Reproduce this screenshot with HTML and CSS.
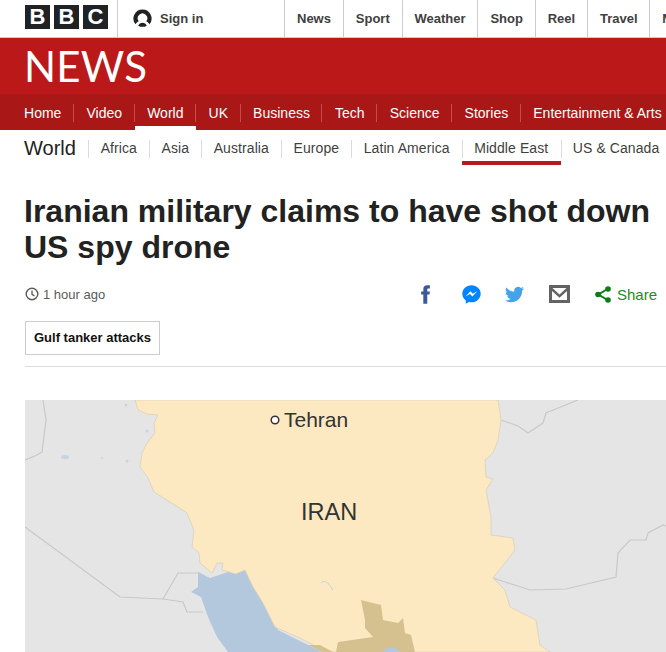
FILE: index.html
```html
<!DOCTYPE html>
<html lang="en">
<head>
    <meta charset="UTF-8">
    <meta name="viewport" content="width=device-width, initial-scale=1.0">
    <title>Iranian military claims to have shot down US spy drone - BBC News</title>
    <link rel="stylesheet" href="styles.css">
</head>
<body>
    <div class="top-bar">
        <div class="bbc-logo">
            <span>B</span><span>B</span><span>C</span>
        </div>
        <a class="sign-in" href="#">
            <svg class="sign-in-icon" viewBox="0 0 20 20">
                <path fill="#1f2326" d="M10 .5a9.500 9.500 0 0 1 7.300 15.600c-.8-1.600-2-2.600-3.400-3.200a5 5 0 1 0-7.800 0c-1.400.6-2.600 1.600-3.400 3.200A9.500 9.500 0 0 1 10 .5z"/>
                <path fill="#1f2326" d="M5.500 17.500c.8-1.800 2.500-3 4.500-3s3.700 1.200 4.500 3c-1.300.8-2.900 1.300-4.500 1.300s-3.200-.5-4.500-1.300z"/>
            </svg>
            Sign in
        </a>
        <div class="top-links">
            <a href="#">News</a>
            <a href="#">Sport</a>
            <a href="#">Weather</a>
            <a href="#">Shop</a>
            <a href="#">Reel</a>
            <a href="#">Travel</a>
            <a href="#">More</a>
        </div>
    </div>

    <div class="masthead">
        <div class="news-logo">NEWS</div>
    </div>

    <div class="main-nav">
        <a href="#"><span>Home</span></a>
        <a href="#"><span>Video</span></a>
        <a href="#" class="active"><span>World</span></a>
        <a href="#"><span>UK</span></a>
        <a href="#"><span>Business</span></a>
        <a href="#"><span>Tech</span></a>
        <a href="#"><span>Science</span></a>
        <a href="#"><span>Stories</span></a>
        <a href="#"><span>Entertainment &amp; Arts</span></a>
    </div>

    <div class="sub-nav">
        <div class="sub-title">World</div>
        <a href="#"><span>Africa</span></a>
        <a href="#"><span>Asia</span></a>
        <a href="#"><span>Australia</span></a>
        <a href="#"><span>Europe</span></a>
        <a href="#"><span>Latin America</span></a>
        <a href="#" class="active"><span>Middle East</span></a>
        <a href="#"><span>US &amp; Canada</span></a>
    </div>

    <div class="story">
        <h1 class="headline">Iranian military claims to have shot down US spy drone</h1>

        <div class="meta-row">
            <div class="time">
                <svg class="clock" viewBox="0 0 14 14">
                    <circle cx="7" cy="7" r="5.800" fill="none" stroke="#5a5a5a" stroke-width="1.400"/>
                    <path d="M7 3.500V7.300L9.500 9" fill="none" stroke="#5a5a5a" stroke-width="1.300"/>
                </svg>
                1 hour ago
            </div>
            <div class="share-icons">
                <svg class="icon-fb" viewBox="0 0 24 24"><path fill="#3b5998" d="M14 8.500V6.300c0-1 .5-1.300 1.300-1.300H17V1.500h-2.800C11 1.500 9.500 3.400 9.500 6v2.500H7V12h2.500v10.500H14V12h2.600l.4-3.500z"/></svg>
                <svg class="icon-messenger" viewBox="0 0 24 24"><path fill="#0084ff" fill-rule="evenodd" d="M12 1.500C6.200 1.500 1.500 5.800 1.500 11.100c0 3 1.500 5.700 3.900 7.500V22.500l3.600-2c1 .3 2 .4 3 .4 5.800 0 10.500-4.300 10.500-9.800S17.800 1.500 12 1.500zm1 12.800l-2.700-2.800-5.200 2.800 5.700-6 2.700 2.800 5.200-2.800z"/></svg>
                <svg class="icon-twitter" viewBox="0 0 24 24"><path fill="#45a3ea" d="M23.953 4.570a10 10 0 01-2.825.775 4.958 4.958 0 002.163-2.723c-.951.555-2.005.959-3.127 1.184a4.920 4.920 0 00-8.384 4.482C7.690 8.095 4.067 6.130 1.640 3.162a4.822 4.822 0 00-.666 2.475c0 1.710.870 3.213 2.188 4.096a4.904 4.904 0 01-2.228-.616v.060a4.923 4.923 0 003.946 4.827 4.996 4.996 0 01-2.212.085 4.936 4.936 0 004.604 3.417 9.867 9.867 0 01-6.102 2.105c-.390 0-.779-.023-1.170-.067a13.995 13.995 0 007.557 2.209c9.053 0 13.998-7.496 13.998-13.985 0-.210 0-.420-.015-.630A9.935 9.935 0 0024 4.590z"/></svg>
                <svg class="icon-mail" viewBox="0 0 21 18"><path fill="#636363" d="M0 0h21v18H0z"/><path fill="#fff" d="M3.500 3h14l-7 6.500zM3 6l7.500 6.800L18 6v9H3z"/></svg>
                <div class="share-link">
                    <svg class="icon-share" viewBox="0 0 16 17">
                        <path d="M12.500 3L3.500 8.500l9 5.500" fill="none" stroke="#0a7d14" stroke-width="2"/>
                        <circle cx="13" cy="3" r="2.800" fill="#0a7d14"/>
                        <circle cx="3" cy="8.500" r="2.800" fill="#0a7d14"/>
                        <circle cx="13" cy="14" r="2.800" fill="#0a7d14"/>
                    </svg>
                    Share
                </div>
            </div>
        </div>

        <a class="tag" href="#">Gulf tanker attacks</a>
        <div class="rule"></div>
    </div>

    <svg class="map" viewBox="25 400 641 252" width="641" height="252">
        <rect x="25" y="400" width="641" height="252" fill="#e5e5e5"/>
        <!-- gulf -->
        <path fill="#b4c8dd" d="M198 572L210 578L246 566L262 600L278 630L322 652H228L217 637L208 617L201 597L191 592L198 587Z"/>
        <!-- borders of the neighbours -->
        <g fill="none" stroke="#c9c9c9" stroke-width="1.200">
            <path d="M43 400L46 420L42 452L35 456L25 460"/>
            <path d="M25 527L120 597L163 599L183 602L187 612L203 612"/>
            <path d="M163 599L178 573L200 573"/>
            <path d="M578 400L546 413L543 423L528 433L518 426L501 420"/>
            <path d="M493 578L530 590L566 589L616 577L618 553L630 540L646 540L648 533L663 525L666 526"/>
        </g>
        <!-- iran -->
        <path fill="#fde9c1" stroke="#d8d0bc" stroke-width=".8" d="M135 400L138 410L147 414L158 415L154 423L155 433L147 443L142 453L140 467L148 478L154 492L170 502L187 513L194 530L192 547L199 553L200 563L212 573L217 563L223 563L222 570L236 574L245 570L253 587L263 603L275 627L300 638L317 647L333 652H550L540 645L536 620L510 607L505 590L493 578L515 550L513 538L491 535L491 517L486 490L493 479L486 477L485 460L493 453L498 440L501 420L498 400Z"/>
        <path fill="#d5c18f" d="M361 600L365 620L365 628L373 637L338 642L336 652H415L411 635L405 633L403 618L398 623L383 620L381 605Z"/>
        <path fill="#d5c18f" d="M308 645L320 645L333 652H322Z"/>
        <path fill="#b4c8dd" d="M383 652C386 646 397 646 400 652Z"/>
        <path fill="none" stroke="#c8d2d8" stroke-width="1" d="M321 583C325 578 330 585 333 590"/>
        <!-- small lakes -->
        <g fill="#c4d4e4">
            <ellipse cx="65" cy="457" rx="4" ry="2"/>
            <circle cx="127" cy="461" r="1.500"/>
            <circle cx="126" cy="405" r="1.500"/>
            <circle cx="147" cy="431" r="1.500"/>
            <circle cx="102" cy="458" r="1"/>
        </g>
        <!-- labels -->
        <circle cx="275" cy="420" r="3.800" fill="#fff" stroke="#333" stroke-width="1.500"/>
        <text class="map-city" x="284" y="427">Tehran</text>
        <text class="map-country" x="301" y="520">IRAN</text>
    </svg>
</body>
</html>
```

FILE: styles.css
```css
html, body {
    width: 666px;
    height: 652px;
    overflow: hidden;
}
body {
    font-family: "Liberation Sans", Arial, sans-serif;
    margin: 0;
    padding: 0;
    background-color: white;
    color: #222;
}
a {
    color: inherit;
    text-decoration: none;
}

.top-bar {
    display: flex;
    height: 37px;
    border-bottom: 1px solid #ccc;
    padding-left: 25px;
    white-space: nowrap;
}
.bbc-logo {
    flex: none;
    display: flex;
    gap: 4px;
    width: 92px;
    padding-top: 5px;
    border-right: 1px solid #ccc;
}
.bbc-logo span {
    width: 25px;
    height: 24px;
    background-color: #1f2326;
    color: white;
    font-weight: bold;
    font-size: 22px;
    line-height: 24px;
    text-align: center;
}
.sign-in {
    flex: none;
    display: flex;
    align-items: center;
    width: 151px;
    padding-left: 15px;
    gap: 8px;
    font-size: 13px;
    font-weight: bold;
    color: #404040;
}
.sign-in-icon {
    width: 19px;
    height: 19px;
}
.top-links {
    display: flex;
}
.top-links a {
    display: flex;
    align-items: center;
    padding: 0 11.8px 0 12px;
    border-left: 1px solid #ccc;
    font-size: 13px;
    font-weight: bold;
    color: #404040;
}

.masthead {
    height: 56px;
    background-color: #bb1919;
    padding-left: 24px;
}
.news-logo {
    font-family: Lato, sans-serif;
    font-size: 42px;
    line-height: 56px;
    color: white;
    letter-spacing: .2px;
}

.main-nav {
    display: flex;
    height: 36px;
    background-color: #a91717;
    padding-left: 11.5px;
    white-space: nowrap;
}
.main-nav a {
    position: relative;
    display: flex;
    align-items: center;
    padding: 0 12.55px;
    font-size: 14px;
    color: white;
}
.main-nav a span {
    position: relative;
    top: 1px;
}
.main-nav a::after {
    content: "";
    position: absolute;
    right: 0;
    top: 10px;
    height: 18px;
    width: 1px;
    background-color: #c94a4a;
}
.main-nav a:last-child::after {
    display: none;
}
.main-nav a.active::before {
    content: "";
    position: absolute;
    left: 0;
    right: 0;
    bottom: 0;
    height: 4px;
    background-color: white;
}

.sub-nav {
    display: flex;
    height: 35px;
    padding-left: 24px;
    white-space: nowrap;
    color: #3f3f42;
}
.sub-title {
    font-size: 20px;
    line-height: 36px;
    padding-right: 12.5px;
    color: #222;
}
.sub-nav a {
    position: relative;
    display: flex;
    align-items: center;
    padding: 0 12.3px;
    font-size: 14px;
    letter-spacing: .08px;
}
.sub-nav a::before {
    content: "";
    position: absolute;
    left: 0;
    top: 10px;
    height: 18px;
    width: 1px;
    background-color: #dcdcdc;
}
.sub-nav a.active {
    box-shadow: inset 0 -4px 0 #bb1919;
}

.story {
    padding-left: 25px;
}
.headline {
    margin: 28px 0 0 -1px;
    font-size: 32px;
    line-height: 36px;
    font-weight: bold;
    color: #222;
    width: 640px;
}
.meta-row {
    display: flex;
    justify-content: space-between;
    align-items: center;
    margin-top: 13px;
    height: 32px;
}
.time {
    display: flex;
    align-items: center;
    gap: 4px;
    font-size: 13px;
    color: #5a5a5a;
}
.clock {
    width: 14px;
    height: 14px;
}
.share-icons {
    display: flex;
    align-items: center;
    padding-right: 9px;
}
.icon-fb {
    width: 21px;
    height: 21px;
    margin-right: 25px;
}
.icon-messenger {
    width: 21px;
    height: 21px;
    margin-right: 23px;
}
.icon-twitter {
    width: 19px;
    height: 19px;
    margin-right: 25px;
}
.icon-mail {
    width: 21px;
    height: 18px;
    margin-right: 25px;
}
.share-link {
    display: flex;
    align-items: center;
    gap: 6px;
    font-size: 15px;
    color: #1f8a1f;
}
.icon-share {
    width: 16px;
    height: 17px;
}
.tag {
    display: inline-block;
    margin-top: 11px;
    padding: 0 8px;
    height: 32px;
    line-height: 32px;
    border: 1px solid #ccc;
    font-size: 13px;
    font-weight: bold;
    color: #111;
}
.rule {
    margin-top: 11px;
    height: 1px;
    background-color: #dcdcdc;
}

.map {
    display: block;
    margin: 33px 0 0 25px;
}
.map-city {
    font-family: "Liberation Sans", Arial, sans-serif;
    font-size: 21px;
    fill: #333;
}
.map-country {
    font-family: "Liberation Sans", Arial, sans-serif;
    font-size: 23.500px;
    fill: #333;
}
```
